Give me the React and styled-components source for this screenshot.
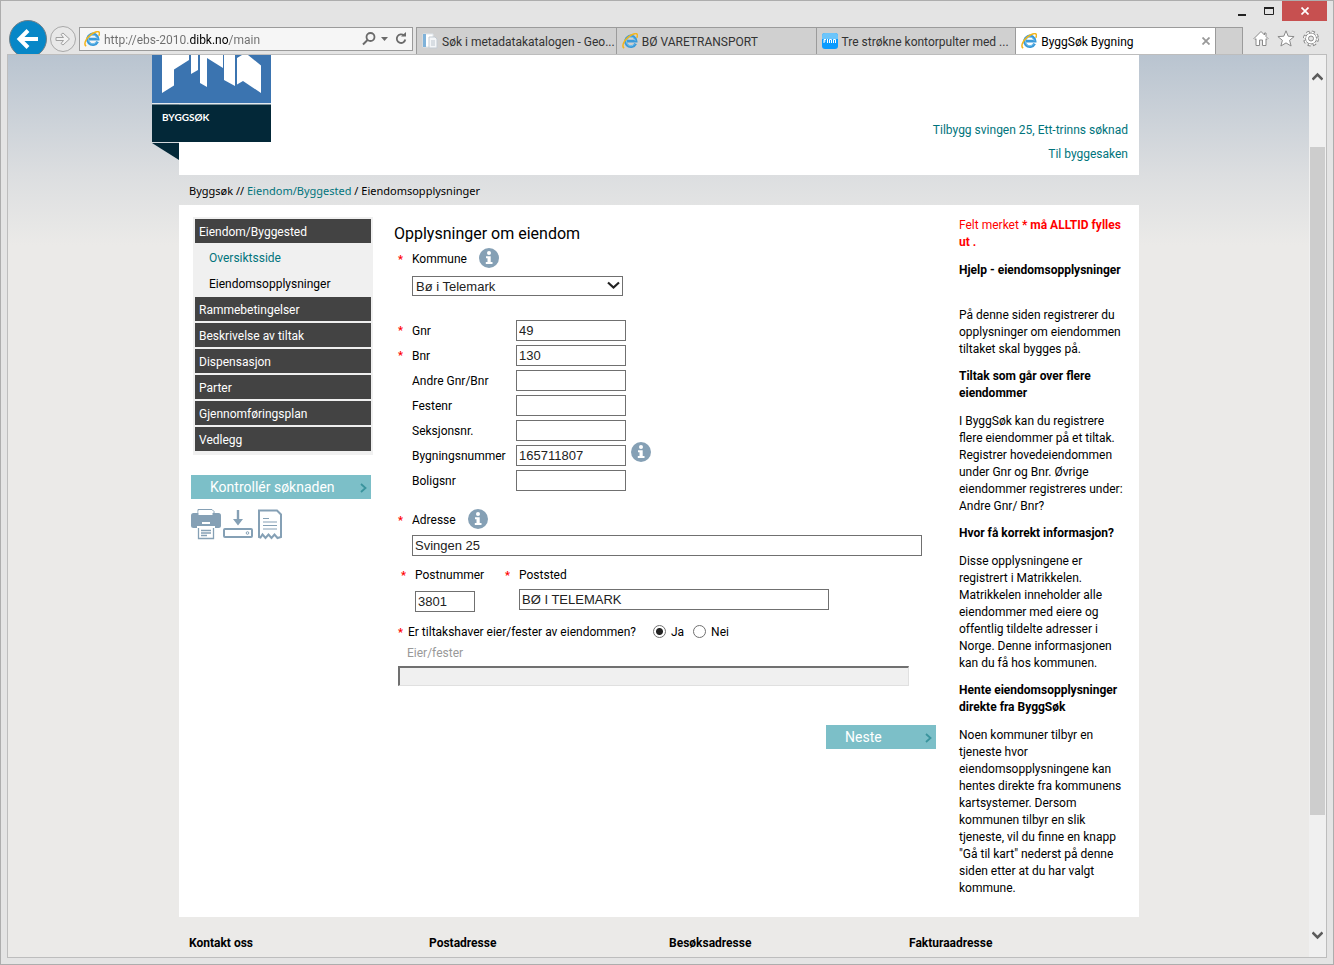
import React from 'react'
import styled, { createGlobalStyle } from 'styled-components'

const menuItems = [
  { text: 'Eiendom/Byggested', type: 'main' },
  { text: 'Oversiktsside', type: 'link' },
  { text: 'Eiendomsopplysninger', type: 'current' },
  { text: 'Rammebetingelser', type: 'main' },
  { text: 'Beskrivelse av tiltak', type: 'main' },
  { text: 'Dispensasjon', type: 'main' },
  { text: 'Parter', type: 'main' },
  { text: 'Gjennomføringsplan', type: 'main' },
  { text: 'Vedlegg', type: 'main' },
]

const numberFields = [
  { id: 'gnr', label: 'Gnr', value: '49', required: true },
  { id: 'bnr', label: 'Bnr', value: '130', required: true },
  { id: 'andre', label: 'Andre Gnr/Bnr', value: '' },
  { id: 'festenr', label: 'Festenr', value: '' },
  { id: 'seksjonsnr', label: 'Seksjonsnr.', value: '' },
  { id: 'bygningsnr', label: 'Bygningsnummer', value: '165711807', info: true },
  { id: 'boligsnr', label: 'Boligsnr', value: '' },
]

const footerTitles = [
  'Kontakt oss',
  'Postadresse',
  'Besøksadresse',
  'Fakturaadresse',
]

const IeIcon = () => (
  <svg width='16' height='16' viewBox='0 0 16 16' fill='none'>
    <path
      d='M13.6 10.6a5.3 5.3 0 1 1 .5-2.4H4.6'
      stroke='#3a9ad9'
      strokeWidth='2.8'
    />
    <path
      d='M12.6 10.8a4.4 4.4 0 1 1 .6-3'
      stroke='#8fd0f2'
      strokeWidth='0.8'
    />
    <path
      d='M2.2 15.2C-.6 13.6 1.6 7.900 6 4.300 10 1 14.300-.2 15.200 1.300c.5.9.2 2.100-.4 3.500'
      stroke='#f3b51b'
      strokeWidth='1.5'
    />
  </svg>
)

const PagesIcon = () => (
  <svg width='16' height='16' viewBox='0 0 16 16'>
    <path d='M1 1h10v13H1z' fill='#fff' stroke='#dfe6ec' />
    <path d='M1 1h3v13H1z' fill='#7fb2d9' />
    <path d='M7 4h6l2 2v9H7z' fill='#f4f6f8' stroke='#c3cbd3' />
    <path d='M9 8h4M9 10h4M9 12h4' stroke='#bcc5ce' />
  </svg>
)

const FinnIcon = () => (
  <svg width='16' height='16' viewBox='0 0 16 16'>
    <rect width='16' height='16' rx='3' fill='#0a9bff' />
    <path d='M0 3a3 3 0 0 1 3-3h10a3 3 0 0 1 3 3v3H0z' fill='#6cc5fb' />
    <path
      d='M2 10V6.500h2M2 8h1.500M5.500 6v4M7.500 10V6.500h2V10M11.500 10V6.500h2V10'
      stroke='#fff'
      fill='none'
    />
  </svg>
)

const InfoIcon = () => (
  <svg width='20' height='20' viewBox='0 0 20 20'>
    <circle cx='10' cy='10' r='10' fill='#85a0b5' />
    <circle cx='10' cy='5' r='2' fill='#fff' />
    <path d='M7 8.300h4.700v5.700H13.500v2H6.800v-2h1.700v-3.800H7z' fill='#fff' />
  </svg>
)

const Chevron = () => (
  <svg width='7' height='10' viewBox='0 0 7 10'>
    <path d='M1 1l4.500 4L1 9' fill='none' stroke='#3a949d' strokeWidth='1.800' />
  </svg>
)

const Logo = () => (
  <LogoSvg width='119' height='106' viewBox='0 0 119 106'>
    <path d='M0 0h119v48H0z' fill='#3b74b0' />
    <path
      d='M10 0h27v5L22 14.500V30.500L10 38zM39 0h7v15l-7 4zM48 0h7v32l-7-4zM55 0h16v13L55 3zM72 0h11v31l-11-6zM85 3l5-3h6l13 10.500V38L91 26l-6 3.500z'
      fill='#fff'
    />
    <path d='M0 48h119v1.500H0z' fill='#e3eaf0' />
    <path d='M0 49.500h119V87H0z' fill='#032838' />
    <path d='M0 88h27v17z' fill='#032838' />
    <text
      x='10'
      y='66'
      fill='#fff'
      fontFamily='Lato, sans-serif'
      fontWeight='700'
      fontSize='10'
    >
      BYGGSØK
    </text>
  </LogoSvg>
)

const Field = ({ id, label, value, required, info }) => (
  <FieldRow>
    <Star>{required && '*'}</Star>
    <FieldLabel htmlFor={id}>{label}</FieldLabel>
    <TextInput id={id} defaultValue={value} $width='110px' />
    {info && (
      <InfoButton type='button' aria-label='Informasjon' $raised>
        <InfoIcon />
      </InfoButton>
    )}
  </FieldRow>
)

const BrowserBar = () => (
  <header>
    <TitleBar>
      <WindowButton aria-label='Minimer'>
        <svg width='8' height='10'>
          <path d='M0 8h8v2H0z' fill='#222' />
        </svg>
      </WindowButton>
      <WindowButton aria-label='Maksimer'>
        <svg width='10' height='8'>
          <path d='M.5 1.500h9v6h-9z' fill='none' stroke='#222' />
          <path d='M0 0h10v2H0z' fill='#222' />
        </svg>
      </WindowButton>
      <WindowButton aria-label='Lukk' $close>
        <svg width='8' height='8'>
          <path d='M.5.5l7 7M7.500.5l-7 7' stroke='#fff' strokeWidth='1.700' />
        </svg>
      </WindowButton>
    </TitleBar>
    <NavBar>
      <NavButton aria-label='Tilbake'>
        <svg width='38' height='34' viewBox='0 0 38 34'>
          <circle cx='19' cy='19' r='18.500' fill='#0787c7' stroke='#6f7f88' />
          <path
            d='M29 19H11M19 10.500L10.500 19l8.500 8.500'
            fill='none'
            stroke='#fff'
            strokeWidth='4'
          />
        </svg>
      </NavButton>
      <NavButton aria-label='Frem'>
        <svg width='26' height='30' viewBox='0 0 26 30'>
          <circle cx='13' cy='15' r='12.500' fill='#e8e8e8' stroke='#a8a8a8' />
          <path
            d='M6 13.500h7.500l-2.500-3 2-1.500 6.500 6-6.500 6-2-1.500 2.500-3H6z'
            fill='#f2f2f2'
            stroke='#a0a0a0'
          />
        </svg>
      </NavButton>
      <AddressBar>
        <IeIcon />
        <AddressInput
          aria-label='Adresse'
          defaultValue='http://ebs-2010.dibk.no/main'
        />
        <svg width='46' height='16' viewBox='0 0 46 16' fill='none'>
          <circle cx='8.500' cy='6' r='4' stroke='#6b6b6b' strokeWidth='1.800' />
          <path d='M5.500 9L1 13.500' stroke='#6b6b6b' strokeWidth='2' />
          <path d='M19 6h7l-3.500 4z' fill='#6b6b6b' />
          <path
            d='M42 4.500A4.300 4.300 0 1 0 43.300 8.500'
            stroke='#6b6b6b'
            strokeWidth='1.800'
          />
          <path d='M39 5.500h5V1z' fill='#6b6b6b' />
        </svg>
      </AddressBar>
      <Tabs>
        <Tab>
          <PagesIcon />
          <TabText>Søk i metadatakatalogen - Geo...</TabText>
        </Tab>
        <Tab>
          <IeIcon />
          <TabText>BØ VARETRANSPORT</TabText>
        </Tab>
        <Tab>
          <FinnIcon />
          <TabText>Tre strøkne kontorpulter med ...</TabText>
        </Tab>
        <Tab $active>
          <IeIcon />
          <TabText>ByggSøk Bygning</TabText>
          <svg width='8' height='8'>
            <path d='M.5.5l7 7M7.500.5l-7 7' stroke='#999' strokeWidth='1.800' />
          </svg>
        </Tab>
        <NewTab aria-label='Ny fane' />
      </Tabs>
      <Tools>
        <svg width='16' height='17' viewBox='0 0 16 17'>
          <path
            d='M8 1.500L1 8.500l1 1 1-.8V15.500h3.500V10h3v5.500H13V8.700l1 .8 1-1-2-2V3h-1.500v2z'
            fill='#fff'
            stroke='#8a8a8a'
          />
        </svg>
        <svg width='18' height='17' viewBox='0 0 18 17'>
          <path
            d='M9 .8l2.200 5.400 5.900.4-4.500 3.700 1.500 5.700L9 12.900 3.900 16l1.500-5.700L.9 6.600l5.900-.4z'
            fill='#fff'
            stroke='#8a8a8a'
          />
        </svg>
        <svg width='16' height='17' viewBox='0 0 16 17' fill='none'>
          <circle
            cx='8'
            cy='8.500'
            r='6.500'
            stroke='#8a8a8a'
            strokeWidth='3'
            strokeDasharray='3 2.100'
          />
          <circle cx='8' cy='8.500' r='5.500' fill='#fff' stroke='#8a8a8a' />
          <circle
            cx='8'
            cy='8.500'
            r='6.300'
            stroke='#fff'
            strokeWidth='1.500'
            strokeDasharray='2 2.950'
          />
          <circle cx='8' cy='8.500' r='2.500' fill='#e4e4e4' stroke='#8a8a8a' />
        </svg>
      </Tools>
    </NavBar>
  </header>
)

const SideMenu = () => (
  <Sidebar>
    <Menu>
      {menuItems.map(({ text, type }) => (
        <li key={text}>
          <MenuLink href='#' $type={type}>
            {text}
          </MenuLink>
        </li>
      ))}
    </Menu>
    <TealButton $width='180px'>
      Kontrollér søknaden
      <Chevron />
    </TealButton>
    <SideTools>
      <IconButton aria-label='Skriv ut'>
        <svg width='30' height='31' viewBox='0 0 30 31'>
          <path d='M7 .5h14l2 2V7H7z' fill='#fff' stroke='#85a0b5' />
          <rect y='4' width='30' height='15' rx='2.500' fill='#85a0b5' />
          <path d='M7.500 2h14v4h-14z' fill='#fff' />
          <path d='M11 13h8v2h-8z' fill='#fff' />
          <path d='M6 17h18v4H6z' fill='#fff' />
          <path
            d='M7.500 19v10.500h15V19M10 21.500h10M10 24h10M10 26.500h6'
            fill='none'
            stroke='#85a0b5'
            strokeWidth='1.300'
          />
        </svg>
      </IconButton>
      <IconButton aria-label='Last ned'>
        <svg width='30' height='31' viewBox='0 0 30 31'>
          <path d='M13.800 1h2.400v9H20l-5 6.500L10 10h3.800z' fill='#85a0b5' />
          <rect
            x='1'
            y='20'
            width='28'
            height='8'
            rx='1'
            fill='#fff'
            stroke='#85a0b5'
            strokeWidth='2'
          />
          <circle cx='24.500' cy='24' r='1.300' fill='none' stroke='#85a0b5' />
        </svg>
      </IconButton>
      <IconButton aria-label='Kvittering'>
        <svg width='30' height='31' viewBox='0 0 30 31' fill='none'>
          <path
            d='M4 28V1.500h18l4 4V28l-3.500 1-3-3.500-3 3.500-3-3.500-3 3.500-3-3.500-2 3z'
            stroke='#85a0b5'
            strokeWidth='2'
          />
          <path
            d='M8 9.500h6M8 13h14M8 16.500h14M8 20h14'
            stroke='#85a0b5'
            strokeWidth='1.200'
          />
        </svg>
      </IconButton>
    </SideTools>
  </Sidebar>
)

const PropertyForm = () => (
  <Form>
    <h1>Opplysninger om eiendom</h1>
    <FieldHead>
      <Star>*</Star>
      <label htmlFor='kommune'>Kommune</label>
      <InfoButton type='button' aria-label='Informasjon'>
        <InfoIcon />
      </InfoButton>
    </FieldHead>
    <SelectBox>
      <select id='kommune'>
        <option>Bø i Telemark</option>
      </select>
      <svg width='13' height='9' viewBox='0 0 13 9'>
        <path d='M1 1.500l5.500 5 5.500-5' fill='none' stroke='#222' strokeWidth='2.200' />
      </svg>
    </SelectBox>
    <Fields>
      {numberFields.map((field) => (
        <Field key={field.id} {...field} />
      ))}
    </Fields>
    <FieldHead>
      <Star>*</Star>
      <label htmlFor='adresse'>Adresse</label>
      <InfoButton type='button' aria-label='Informasjon'>
        <InfoIcon />
      </InfoButton>
    </FieldHead>
    <AddressField>
      <TextInput id='adresse' defaultValue='Svingen 25' $width='510px' />
    </AddressField>
    <PostRow>
      <Star>*</Star>
      <PostField $gap='7px'>
        <label htmlFor='postnr'>Postnummer</label>
        <TextInput id='postnr' defaultValue='3801' $width='60px' />
      </PostField>
      <Star>*</Star>
      <PostField $gap='5px'>
        <label htmlFor='poststed'>Poststed</label>
        <TextInput
          id='poststed'
          defaultValue='BØ I TELEMARK'
          $width='310px'
        />
      </PostField>
    </PostRow>
    <Question>
      <legend>
        <Star $narrow>*</Star>Er tiltakshaver eier/fester av eiendommen?
      </legend>
      <input type='radio' name='eier' id='ja' defaultChecked />
      <label htmlFor='ja'>Ja</label>
      <input type='radio' name='eier' id='nei' />
      <label htmlFor='nei'>Nei</label>
    </Question>
    <OwnerField>
      <label htmlFor='fester'>Eier/fester</label>
      <input id='fester' disabled />
    </OwnerField>
    <Actions>
      <TealButton type='button' $width='110px'>
        Neste
        <Chevron />
      </TealButton>
    </Actions>
  </Form>
)

const HelpText = () => (
  <Help>
    <Required>
      Felt merket <b>* må ALLTID fylles ut .</b>
    </Required>
    <h2 className='first'>Hjelp - eiendomsopplysninger</h2>
    <p>
      På denne siden registrerer du opplysninger om eiendommen tiltaket skal
      bygges på.
    </p>
    <h2>Tiltak som går over flere eiendommer</h2>
    <p>
      I ByggSøk kan du registrere flere eiendommer på et tiltak. Registrer
      hovedeiendommen under Gnr og Bnr. Øvrige eiendommer registreres under:
      Andre Gnr/ Bnr?
    </p>
    <h2>Hvor få korrekt informasjon?</h2>
    <p>
      Disse opplysningene er registrert i Matrikkelen. Matrikkelen inneholder
      alle eiendommer med eiere og offentlig tildelte adresser i Norge. Denne
      informasjonen kan du få hos kommunen.
    </p>
    <h2>Hente eiendomsopplysninger direkte fra ByggSøk</h2>
    <p>
      Noen kommuner tilbyr en tjeneste hvor eiendomsopplysningene kan hentes
      direkte fra kommunens kartsystemer. Dersom kommunen tilbyr en slik
      tjeneste, vil du finne en knapp "Gå til kart" nederst på denne siden
      etter at du har valgt kommune.
    </p>
  </Help>
)

const App = () => {
  return (
    <Window>
      <GlobalStyle />
      <BrowserBar />
      <Viewport>
        <Page>
          <Container>
            <PageHeader>
              <Logo />
              <HeaderLinks>
                <a href='#'>Tilbygg svingen 25, Ett-trinns søknad</a>
                <a href='#'>Til byggesaken</a>
              </HeaderLinks>
            </PageHeader>
            <Breadcrumb>
              Byggsøk // <a href='#'>Eiendom/Byggested</a> /
              Eiendomsopplysninger
            </Breadcrumb>
            <Content>
              <SideMenu />
              <PropertyForm />
              <HelpText />
            </Content>
            <Footer>
              {footerTitles.map((title) => (
                <h3 key={title}>{title}</h3>
              ))}
            </Footer>
          </Container>
        </Page>
        <ScrollBar>
          <ScrollArrow />
          <Thumb />
          <ScrollArrow $down />
        </ScrollBar>
      </Viewport>
    </Window>
  )
}

const ScrollArrow = ({ $down }) => (
  <svg width='11' height='9' viewBox='0 0 11 9'>
    <path
      d={$down ? 'M.5 1.500l5 5 5-5' : 'M.5 7.500l5-5 5 5'}
      fill='none'
      stroke='#5c5c5c'
      strokeWidth='2.600'
    />
  </svg>
)

const GlobalStyle = createGlobalStyle`
  * {
    box-sizing: border-box;
  }
  body {
    margin: 0;
    font-family: Roboto, sans-serif;
    font-size: 12px;
    line-height: 17px;
    color: #000;
  }
  button {
    border: 0;
    padding: 0;
    background: none;
    font: inherit;
  }
  a {
    color: #00747c;
    text-decoration: none;
  }
  svg {
    display: block;
    flex-shrink: 0;
  }
  h1, h2, h3, p, ul {
    margin: 0;
    padding: 0;
  }
`

const Window = styled.div`
  display: flex;
  flex-direction: column;
  min-height: 100vh;
  padding: 0 6px 6px;
  border: 1px solid #adadad;
  background: #e4e4e4;
`

const TitleBar = styled.div`
  display: flex;
  justify-content: flex-end;
  height: 19px;
`

const WindowButton = styled.button`
  display: flex;
  align-items: center;
  justify-content: center;
  width: ${({ $close }) => ($close ? '45px' : '27px')};
  height: 20px;
  background: ${({ $close }) => ($close ? '#c75050' : 'transparent')};
`

const NavBar = styled.div`
  display: flex;
  align-items: flex-end;
  height: 34px;
  padding-left: 2px;
`

const NavButton = styled.button`
  margin-right: 3px;
`

const AddressBar = styled.div`
  display: flex;
  align-items: center;
  flex: 324 1 0;
  height: 24px;
  margin: 0 3px 3px 0;
  padding: 0 4px;
  border: 1px solid #9b9b9b;
  background: #f6f6f6;
`

const AddressInput = styled.input`
  flex: 1;
  min-width: 0;
  margin-left: 4px;
  padding: 2px 0 0;
  border: 0;
  outline: 0;
  font: 12px Roboto, sans-serif;
  color: transparent;
  background: linear-gradient(
    to right,
    #6d6d6d 85px,
    #000 85px,
    #000 125px,
    #6d6d6d 125px
  );
  background-clip: text;
`

const Tabs = styled.div`
  display: flex;
  flex: 827 1 0;
  height: 27px;
`

const Tab = styled.div`
  display: flex;
  align-items: center;
  flex: 1 1 0;
  min-width: 0;
  padding: 0 5px;
  border: 1px solid #9b9b9b;
  border-width: 1px 0 0 1px;
  background: ${({ $active }) => ($active ? '#fff' : '#d0d0d0')};
  color: ${({ $active }) => ($active ? '#000' : '#333')};
`

const TabText = styled.span`
  flex: 1;
  margin-left: 4px;
  padding-top: 2px;
  white-space: nowrap;
`

const NewTab = styled.button`
  width: 28px;
  border: 1px solid #9b9b9b;
  border-bottom: 0;
  background: #d0d0d0;
`

const Tools = styled.div`
  display: flex;
  gap: 8px;
  padding: 0 8px 7px 10px;
`

const Viewport = styled.div`
  display: flex;
  flex: 1;
  border: 1px solid #bdbdbd;
`

const Page = styled.main`
  flex: 1;
  padding-left: 1px;
  background: #ebeae8 linear-gradient(#b9c4d0, #dcdee0 120px, #ebeae8 190px)
    no-repeat;
`

const Container = styled.div`
  max-width: 960px;
  margin: 0 auto;
`

const PageHeader = styled.div`
  display: flex;
  justify-content: space-between;
  height: 120px;
  background: #fff;
`

const LogoSvg = styled.svg`
  margin-left: -27px;
`

const HeaderLinks = styled.nav`
  display: flex;
  flex-direction: column;
  align-items: flex-end;
  gap: 7px;
  padding: 67px 11px 0 0;
`

const Breadcrumb = styled.nav`
  padding: 7px 10px 6px;
  font-family: 'Noto Sans', sans-serif;
  font-size: 11px;
`

const Content = styled.div`
  display: flex;
  padding: 12px 10px 20px 12px;
  background: #fff;
`

const Sidebar = styled.aside`
  width: 182px;
`

const Menu = styled.ul`
  display: flex;
  flex-direction: column;
  gap: 2px;
  margin: 0 0 20px 2px;
  padding: 2px 2px 4px;
  list-style: none;
  background: #f0f0f0;
`

const MenuLink = styled.a`
  display: block;
  padding: 5px 4px 2px ${({ $type }) => ($type === 'main' ? '4px' : '14px')};
  background: ${({ $type }) => ($type === 'main' ? '#434343' : 'transparent')};
  color: ${({ $type }) =>
    $type === 'main' ? '#fff' : $type === 'link' ? '#00747c' : '#000'};
`

const TealButton = styled.button`
  display: flex;
  align-items: center;
  justify-content: space-between;
  width: ${({ $width }) => $width};
  height: 24px;
  padding: 1px 4px 0 19px;
  background: #7cbfc8;
  color: #fff;
  font-size: 14px;
`

const SideTools = styled.div`
  display: flex;
  gap: 2px;
  margin-top: 10px;
`

const IconButton = styled.button`
  width: 30px;
`

const Form = styled.form`
  flex: 1;
  padding: 5px 0 0 21px;
  h1 {
    font-size: 16px;
    font-weight: 400;
    line-height: 24px;
  }
`

const Star = styled.span`
  width: ${({ $narrow }) => ($narrow ? '10px' : '14px')};
  display: inline-block;
  color: #f00;
  font-size: 11px;
  font-weight: 700;
`

const FieldHead = styled.div`
  display: flex;
  align-items: center;
  height: 27px;
  padding-left: 4px;
  label {
    margin-right: 12px;
  }
`

const InfoButton = styled.button`
  margin: ${({ $raised }) => ($raised ? '0 0 7px 5px' : '0 0 4px')};
`

const SelectBox = styled.div`
  position: relative;
  width: 211px;
  margin: 3px 0 24px 18px;
  select {
    display: block;
    width: 100%;
    height: 20px;
    padding: 0 3px;
    appearance: none;
    border: 1px solid #707070;
    border-radius: 0;
    background: #fff;
    color: #222;
    font: 13px 'Liberation Sans', sans-serif;
  }
  svg {
    position: absolute;
    top: 5px;
    right: 3px;
    pointer-events: none;
  }
`

const Fields = styled.div`
  display: flex;
  flex-direction: column;
  gap: 4px;
  margin-bottom: 16px;
`

const FieldRow = styled.div`
  display: flex;
  align-items: center;
  height: 21px;
  padding-left: 4px;
`

const FieldLabel = styled.label`
  width: 104px;
  padding-top: 2px;
  white-space: nowrap;
`

const TextInput = styled.input`
  display: block;
  width: ${({ $width }) => $width};
  height: 21px;
  padding: 0 2px;
  border: 1px solid #707070;
  background: #fff;
  color: #222;
  font: 13px 'Liberation Sans', sans-serif;
`

const AddressField = styled.div`
  padding: 1px 0 0 18px;
`

const PostRow = styled.div`
  display: flex;
  padding: 11px 0 0 7px;
`

const PostField = styled.div`
  display: flex;
  flex-direction: column;
  gap: ${({ $gap }) => $gap};
  &:first-of-type {
    width: 90px;
  }
`

const Question = styled.fieldset`
  display: flex;
  align-items: center;
  margin: 12px 0 0;
  padding: 0 0 0 4px;
  border: 0;
  legend {
    float: left;
    margin-right: 8px;
    padding: 0;
  }
  input {
    width: 13px;
    height: 13px;
    margin: 0 5px 2px 9px;
    appearance: none;
    border: 1px solid #707070;
    border-radius: 50%;
    background: #fff;
  }
  input:checked {
    background: radial-gradient(#222 3px, #fff 4px);
  }
`

const OwnerField = styled.div`
  padding: 4px 0 0 4px;
  label {
    display: block;
    padding-left: 9px;
    color: #999;
  }
  input {
    display: block;
    width: 511px;
    height: 20px;
    margin-top: 4px;
    border: 2px solid;
    border-width: 2px 1px 1px 2px;
    border-color: #707070 #e0e0e0 #e0e0e0 #707070;
    background: #f0f0f0;
  }
`

const Actions = styled.div`
  display: flex;
  justify-content: flex-end;
  padding: 39px 23px 0 0;
`

const Help = styled.aside`
  width: 170px;
  h2 {
    margin-bottom: 11px;
    font-size: 12px;
    line-height: 17px;
  }
  .first {
    margin-bottom: 28px;
  }
  p {
    margin-bottom: 10px;
  }
  p:last-child {
    margin-bottom: 0;
  }
`

const Required = styled.div`
  margin-bottom: 11px;
  color: #f00;
`

const Footer = styled.footer`
  display: grid;
  grid-template-columns: repeat(4, 1fr);
  padding: 18px 0 5px;
  h3 {
    padding-left: 10px;
    font-size: 12px;
    line-height: 17px;
  }
`

const ScrollBar = styled.div`
  display: flex;
  flex-direction: column;
  align-items: center;
  justify-content: space-between;
  width: 17px;
  padding: 17px 0;
  background: #f0f0f0;
`

const Thumb = styled.div`
  flex: 0 1 668px;
  width: 15px;
  margin: 66px 0 auto;
  background: #cdcdcd;
`

export default App
